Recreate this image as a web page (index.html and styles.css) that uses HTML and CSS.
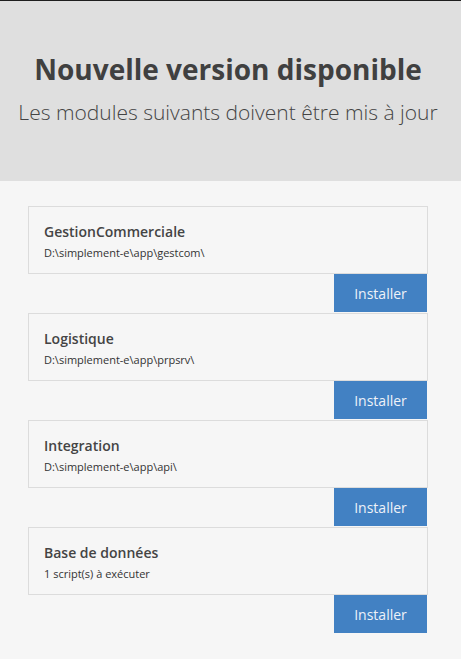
FILE: index.html
```html
<!DOCTYPE html>
<html lang="fr">
<head>
<meta charset="utf-8">
<link rel="stylesheet" href="styles.css">
</head>
<body>
<header class="hero">
  <h1 class="hero-title">Nouvelle version disponible</h1>
  <p class="hero-sub">Les modules suivants doivent être mis à jour</p>
</header>
<main class="list">
  <section class="module">
    <div class="card">
      <div class="card-title">GestionCommerciale</div>
      <div class="card-path">D:\simplement-e\app\gestcom\</div>
    </div>
    <div class="actions"><button class="btn">Installer</button></div>
  </section>
  <section class="module">
    <div class="card">
      <div class="card-title">Logistique</div>
      <div class="card-path">D:\simplement-e\app\prpsrv\</div>
    </div>
    <div class="actions"><button class="btn">Installer</button></div>
  </section>
  <section class="module">
    <div class="card">
      <div class="card-title">Integration</div>
      <div class="card-path">D:\simplement-e\app\api\</div>
    </div>
    <div class="actions"><button class="btn">Installer</button></div>
  </section>
  <section class="module">
    <div class="card">
      <div class="card-title">Base de données</div>
      <div class="card-path">1 script(s) à exécuter</div>
    </div>
    <div class="actions"><button class="btn">Installer</button></div>
  </section>
</main>
</body>
</html>
```
FILE: styles.css
```css
html, body {
  margin: 0;
  padding: 0;
  background: #f6f6f6;
  font-family: "Open Sans", "Noto Sans", sans-serif;
  color: #444;
}
body {
  border-top: 1px solid #1e1e1e;
}
.hero {
  background: #dfdfdf;
  height: 180px;
  box-sizing: border-box;
  padding: 50px 5px 0 0;
  text-align: center;
}
.hero-title {
  margin: 0;
  font-size: 28px;
  font-weight: 700;
  line-height: 36px;
  color: #404040;
}
.hero-sub {
  margin: 11px 0 0;
  font-size: 21px;
  font-weight: 300;
  line-height: 28px;
  color: #444;
}
.list {
  width: 400px;
  margin: 25px 0 0 28px;
  display: flex;
  flex-direction: column;
  gap: 1px;
}
.card {
  border: 1px solid #dcdcdc;
  height: 68px;
  box-sizing: border-box;
  padding: 15px 15px;
}
.card-title {
  font-size: 14px;
  font-weight: 600;
  line-height: 20px;
  color: #444;
}
.card-path {
  font-size: 11px;
  line-height: 18px;
  margin-top: 2px;
  color: #333;
}
.actions {
  display: flex;
  justify-content: flex-end;
}
.btn {
  width: 93px;
  height: 38px;
  margin-right: 1px;
  border: 0;
  background: #4281c3;
  color: #eef2f8;
  font-family: "Open Sans", "Noto Sans", sans-serif;
  font-size: 14px;
  padding: 0;
}
```
